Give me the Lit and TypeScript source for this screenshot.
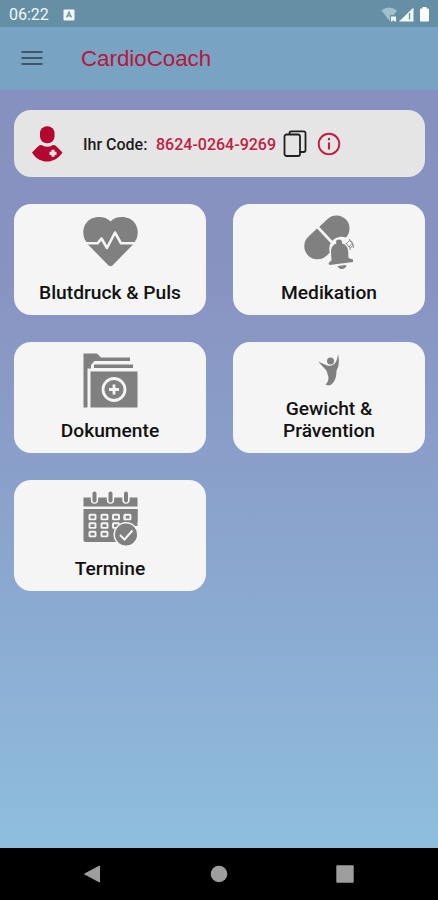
import { LitElement, html, svg, css } from "lit";
import { customElement, property } from "lit/decorators.js";

const heart = html`<svg width="55" height="55" viewBox="0 0 55 55">
  <path fill="#808080" d="M27.500 6.500C23 1 14 1 8.500 3.500C1 7.500-1.500 16 1.500 24L5 29.500L25.500 50.500Q27.500 52 29.500 50.500L50 29.500L53.500 24C56.500 16 54 7.500 46.500 3.500C41 1 32 1 27.500 6.500Z"/>
  <path fill="none" stroke="#f5f5f5" stroke-width="2.600" stroke-linejoin="round" d="M0 28.300H14.500L18.500 23.500L24 33L32 17.500L38 28.300H55"/>
</svg>`;

const pills = html`<svg width="55" height="55" viewBox="0 0 55 55" overflow="visible">
  <g transform="translate(25 22.300) rotate(-43)" fill="#808080">
    <path d="M-13-13.200H-1.300V13.200H-13A13.200 13.200 0 0 1-13-13.200Z"/>
    <path d="M1.500-13H13A13 13 0 0 1 13 13H1.500Z"/>
  </g>
  <g transform="translate(1.500 0)">
    <circle cx="38" cy="34" r="12.300" fill="#f5f5f5"/>
    <path d="M29 34L24 44V55H52V34Z" fill="#f5f5f5"/>
    <path fill="#808080" d="M33 28.500L32.500 27Q32.500 24.500 35.500 24.500T38.500 27V28.500C42.500 29.500 44.500 32.500 44.700 37L45 43L49.500 44.500V47L26 50L25 48L28 45.500L27.500 37C27.500 32.500 29.500 29.500 33 28.500Z"/>
    <path fill="#808080" d="M34 51L43 50C42.500 55 35.500 55.500 34 51Z"/>
    <path fill="none" stroke="#808080" stroke-width=".9" d="M42.500 28.500L46 32.500L47 35M45.500 24L49 28L50 33M42.500 29L46 25.500L49 28L45.500 32M47 33L50 29.500"/>
  </g>
</svg>`;

const folder = html`<svg width="55" height="55" viewBox="0 0 55 55">
  <g fill="#808080">
    <path d="M.5.5H14L18 4.500H47V8H11.500L8 12V15.500H4.500V54.500H.5Z"/>
    <path d="M11 11.500H50V15H11Z"/>
    <path d="M7.500 18.500H54.500V54.500H7.500Z"/>
  </g>
  <circle cx="31" cy="36.500" r="11" fill="none" stroke="#f5f5f5" stroke-width="2.800"/>
  <path d="M31 31.500V41.500M26 36.500H36" stroke="#f5f5f5" stroke-width="2.800"/>
</svg>`;

const figure = html`<svg width="24" height="33" viewBox="0 0 24 33">
  <circle cx="13.500" cy="8" r="3.500" fill="#808080"/>
  <path fill="#808080" d="M1.500 8.500C4.500 10.500 7.500 11 11 12.800C17 13 20 10 21 1C22.800 9 21.500 14.500 19.500 17.500C19.500 24 18 29 13.500 32C11.500 32.800 9.500 32 8.500 31.500C12 28 12 25 10.500 21C10 16 5 14 1.500 8.500Z"/>
</svg>`;

const dayCells = [[9, 26], [21, 26], [32.500, 26], [44, 26], [9, 34.500], [21, 34.500], [32.500, 34.500], [9, 43], [21, 43]];

const calendar = html`<svg width="55" height="55" viewBox="0 0 55 55">
  <path fill="#808080" d="M.5 6.500H54.500V15.500H.5ZM.5 18H54.500V51H2.500Q.5 51 .5 49Z"/>
  ${[11.500, 27.500, 43].map((x) => svg`<path d=${`M${x} 2.500V9`} stroke="#f5f5f5" stroke-width="7.400" stroke-linecap="round"/>
    <path d=${`M${x} 2.500V9.500`} stroke="#808080" stroke-width="4" stroke-linecap="round"/>`)}
  ${dayCells.map(([x, y]) => svg`<rect x=${x - 2.500} y=${y - 2.200} width="6" height="4.600" rx=".6" fill="none" stroke="#f5f5f5" stroke-width="1.900"/>`)}
  <path d="M43 31H55V51H43Z" fill="#f5f5f5"/>
  <path d="M43 18H54.500V35H43Z" fill="#808080"/>
  <rect x="41.500" y="23.800" width="6" height="4.600" rx=".6" fill="none" stroke="#f5f5f5" stroke-width="1.900"/>
  <circle cx="43" cy="43.500" r="12.500" fill="#f5f5f5"/>
  <circle cx="43" cy="43.500" r="11" fill="#808080"/>
  <path d="M37 44L41.500 48.500L49.500 39.500" fill="none" stroke="#f5f5f5" stroke-width="2"/>
</svg>`;

@customElement("menu-tile")
class MenuTile extends LitElement {
  @property({ attribute: false }) icon: unknown;
  @property({ attribute: false }) lines: string[] = [];

  static styles = css`
    :host {
      display: flex;
      flex-direction: column;
      align-items: center;
      justify-content: space-between;
      box-sizing: border-box;
      height: 111.500px;
      padding: 11px 0 11.500px;
      border-radius: 17px;
      background: #f5f5f5;
    }
    svg { display: block; }
    .label {
      font: 500 19.200px/22px Roboto, sans-serif;
      color: #111;
      text-align: center;
      white-space: nowrap;
    }
  `;

  render() {
    return html`${this.icon}
      <div class="label">${this.lines.map((line) => html`<div>${line}</div>`)}</div>`;
  }
}

@customElement("app-root")
class AppRoot extends LitElement {
  static styles = css`
    :host {
      display: flex;
      flex-direction: column;
      height: 900px;
      overflow: hidden;
      font-family: Roboto, sans-serif;
      background: #000;
    }
    svg { display: block; flex: none; }
    .status {
      display: flex;
      align-items: center;
      box-sizing: border-box;
      height: 27px;
      padding: 2px 8px 0 9px;
      background: #648fa5;
      color: #f2f7f9;
      font-size: 16px;
    }
    .clock { width: 54px; }
    .signals { margin-left: auto; }
    .bar {
      display: flex;
      align-items: center;
      box-sizing: border-box;
      height: 63px;
      padding-left: 21px;
      background: #78a3c2;
    }
    .bar svg { margin-top: -2px; }
    .title {
      margin-left: 38px;
      padding-top: 1px;
      font: 22.300px "Liberation Sans", Arial, sans-serif;
      color: #b5173c;
    }
    .content {
      flex: 1;
      padding: 20px 13px 0 14px;
      background: linear-gradient(#8791c0 0%, #8993c2 25%, #8aa5ce 60%, #8fbedd 100%);
    }
    .code {
      display: flex;
      align-items: center;
      box-sizing: border-box;
      height: 67px;
      padding-left: 17px;
      border-radius: 17px;
      background: #e5e5e5;
      font-size: 16px;
      font-weight: 500;
      color: #1c1c1c;
    }
    .caption { margin-left: 20px; width: 73px; padding-top: 1px; white-space: nowrap; }
    .number { width: 127px; padding-top: 1px; color: #c0203f; white-space: nowrap; }
    .info { margin-left: 9.500px; }
    .tiles {
      display: grid;
      grid-template-columns: 192px 192px;
      gap: 26.700px 27px;
      margin-top: 26.500px;
    }
    .nav {
      height: 52.500px;
      background: #000;
      display: flex;
      align-items: center;
      justify-content: space-between;
      padding: 0 84px 0 83px;
    }
  `;

  render() {
    return html`
      <div class="status">
        <span class="clock">06:22</span>
        <svg width="12" height="12" viewBox="0 0 12 12">
          <rect x=".5" y=".5" width="11" height="11" rx="1" fill="#f5f8f9"/>
          <path d="M3.500 8.500L6 3L8.500 8.500M4.500 6.800H7.500" fill="none" stroke="#648fa5" stroke-width="1.200"/>
        </svg>
        <svg class="signals" width="50" height="16" viewBox="0 0 50 16">
          <path fill="#a3bfcb" d="M1.500 3.500Q9-2.500 17 3.500L14 8H10V14.500Z"/>
          <path fill="#f5f8f9" d="M11 9.500H16V14.500H14.500L13.500 13L12 14.500H11Z"/>
          <path fill="#f5f8f9" d="M19 14.500L33.500.5V14.500Z"/>
          <path stroke="#648fa5" stroke-width="1.300" d="M29.500 6V12.500"/>
          <path fill="#fff" d="M40 2.500Q40 1.500 41 1.500H42.500V0H46.500V1.500H48Q49 1.500 49 2.500V13.500Q49 14.500 48 14.500H41Q40 14.500 40 13.500Z"/>
        </svg>
      </div>
      <div class="bar">
        <svg width="22" height="16" viewBox="0 0 22 16">
          <path d="M.5 2H21.500M.5 8H21.500M.5 14H21.500" stroke="#3e5667" stroke-width="2"/>
        </svg>
        <span class="title">CardioCoach</span>
      </div>
      <div class="content">
        <div class="code">
          <svg width="32" height="36" viewBox="0 0 32 36">
            <rect x="9" y=".3" width="14.500" height="17" rx="7" fill="#b5062f"/>
            <path fill="#b5062f" d="M1 26.500L7 20.500Q9.500 18.500 11 19.200Q16.500 22.500 21.500 19.200Q23.500 18.500 25.500 20.500L31.500 26.500C27 33 21.500 35.500 16 35.500S5 33 1 26.500Z"/>
            <path d="M22 23.800V30.800M18.500 27.300H25.500" stroke="#efe4e6" stroke-width="3.200"/>
          </svg>
          <span class="caption">Ihr Code:</span>
          <span class="number">8624-0264-9269</span>
          <svg width="24" height="28" viewBox="0 0 24 28" fill="none" stroke="#202020" stroke-width="1.800">
            <rect x="1.500" y="4.500" width="15.500" height="21.500" rx="2"/>
            <path d="M6.500 4.500V3.200Q6.500 1.300 8.500 1.300H20.500Q22.500 1.300 22.500 3.300V20Q22.500 22 20.500 22H17"/>
          </svg>
          <svg class="info" width="24" height="24" viewBox="0 0 24 24">
            <circle cx="12" cy="12" r="10.300" fill="none" stroke="#bf1e3e" stroke-width="1.900"/>
            <path d="M12 6V8.200M12 10.500V17.500" stroke="#bf1e3e" stroke-width="2.100"/>
          </svg>
        </div>
        <div class="tiles">
          <menu-tile .icon=${heart} .lines=${["Blutdruck & Puls"]}></menu-tile>
          <menu-tile .icon=${pills} .lines=${["Medikation"]}></menu-tile>
          <menu-tile .icon=${folder} .lines=${["Dokumente"]}></menu-tile>
          <menu-tile .icon=${figure} .lines=${["Gewicht &", "Prävention"]}></menu-tile>
          <menu-tile .icon=${calendar} .lines=${["Termine"]}></menu-tile>
        </div>
      </div>
      <div class="nav">
        <svg width="18" height="18" viewBox="0 0 18 18"><path d="M1.500 9L16.500 1V17Z" fill="#9e9e9e" stroke="#9e9e9e" stroke-linejoin="round"/></svg>
        <svg width="18" height="18" viewBox="0 0 18 18"><circle cx="9" cy="9" r="8.300" fill="#9e9e9e"/></svg>
        <svg width="18" height="18" viewBox="0 0 18 18"><rect x=".3" y=".3" width="17.400" height="17.400" rx="1" fill="#9e9e9e"/></svg>
      </div>
    `;
  }
}
